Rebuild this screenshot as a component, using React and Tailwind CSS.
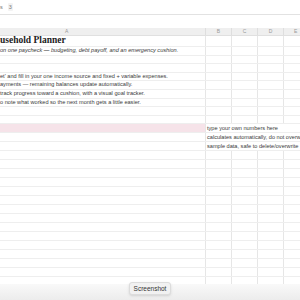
import React from 'react';

const rows = [
  { h: 'h-[11px]', a: 'usehold Planner', kind: 'title' },
  { h: 'h-[9px]', a: 'on one paycheck — budgeting, debt payoff, and an emergency cushion.', kind: 'sub' },
  { h: 'h-[8.4px]' },
  { h: 'h-[8.4px]' },
  { h: 'h-[8.6px]', a: "et' and fill in your one income source and fixed + variable expenses." },
  { h: 'h-[8.6px]', a: 'ayments — remaining balances update automatically.' },
  { h: 'h-[8.6px]', a: 'track progress toward a cushion, with a visual goal tracker.' },
  { h: 'h-[8.6px]', a: 'o note what worked so the next month gets a little easier.' },
  { h: 'h-[8.6px]' },
  { h: 'h-[8.6px]' },
  { h: 'h-[9px]', pink: true, b: 'type your own numbers here' },
  { h: 'h-[9px]', b: 'calculates automatically, do not overwrite' },
  { h: 'h-[9px]', b: 'sample data, safe to delete/overwrite' },
];

const blankRows = Array.from({ length: 18 });

const Row = ({ row }) => {
  const aText =
    row.kind === 'title'
      ? 'font-["Liberation_Serif",serif] font-bold text-[9.5px] text-[#222]'
      : row.kind === 'sub'
      ? 'italic text-[5.6px] text-[#3a3a3a]'
      : 'text-[5.6px] text-[#3a3a3a]';
  return (
    <div className={`flex shrink-0 border-b border-[#eeeeee] ${row.h}`}>
      <div
        className={`w-[205px] shrink-0 flex items-center overflow-hidden whitespace-nowrap leading-none ${
          row.pink ? 'bg-[#f6e3e9]' : ''
        } ${aText}`}
      >
        {row.a}
      </div>
      {row.b ? (
        <div className="flex-1 flex items-center pl-[1px] whitespace-nowrap overflow-hidden text-[5.6px] leading-none text-[#3a3a3a] border-l border-[#e6e6e6]">
          {row.b}
        </div>
      ) : (
        <>
          <div className="w-[26px] shrink-0 border-l border-[#e6e6e6]" />
          <div className="w-[26px] shrink-0 border-l border-[#e6e6e6]" />
          <div className="w-[26px] shrink-0 border-l border-[#e6e6e6]" />
          <div className="flex-1 border-l border-[#e6e6e6]" />
        </>
      )}
    </div>
  );
};

export default function App() {
  return (
    <div className='w-[300px] h-[300px] overflow-hidden bg-white flex flex-col font-["Liberation_Sans",Arial,sans-serif]'>
      <div className="h-[15px] shrink-0 flex items-center gap-[5px] border-b border-[#e2e2e2] text-[5.5px] text-[#777]">
        <span>s</span>
        <span className="px-[1px] bg-[#f3f3f3] rounded-[1px]">3</span>
      </div>
      <div className="h-[13px] shrink-0" />
      <div className="h-[8px] shrink-0 flex bg-[#efefef] border-b border-[#e0e0e0] text-[5px] text-[#999] leading-none">
        <div className="w-[205px] shrink-0 flex items-center pl-[65px]">A</div>
        <div className="w-[26px] shrink-0 flex items-center justify-center border-l border-[#dedede]">B</div>
        <div className="w-[26px] shrink-0 flex items-center justify-center border-l border-[#dedede]">C</div>
        <div className="w-[26px] shrink-0 flex items-center justify-center border-l border-[#dedede]">D</div>
        <div className="flex-1 flex items-center pl-[10px] border-l border-[#dedede]">E</div>
      </div>
      <div className="flex-1 flex flex-col overflow-hidden">
        {rows.map((r, i) => (
          <Row key={i} row={r} />
        ))}
        {blankRows.map((_, i) => (
          <Row key={'b' + i} row={{ h: 'h-[9px]' }} />
        ))}
      </div>
      <div className="h-[16px] shrink-0 flex justify-center bg-gradient-to-b from-[#f9f9f9] to-[#ececec]">
        <div className="-mt-[2px] h-[13px] px-[4px] flex items-center rounded-[3px] border border-[#dcdcdc] bg-[#f1f1f1] shadow-sm text-[6.5px] text-[#333]">
          Screenshot
        </div>
      </div>
    </div>
  );
}
